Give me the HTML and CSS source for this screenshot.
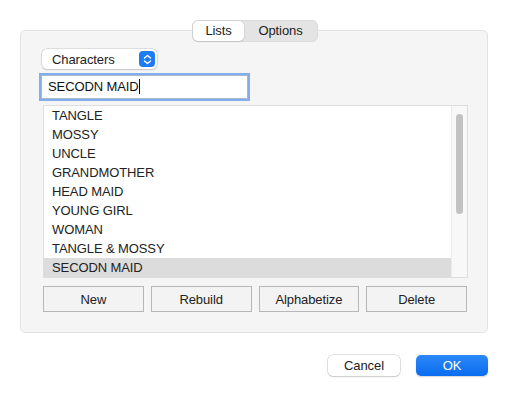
FILE: index.html
```html
<!doctype html>
<html lang="en">
  <head>
    <meta charset="UTF-8" />
    <title>Lists</title>
    <link rel="stylesheet" href="styles.css">
  </head>
  <body>
    <div class="dialog">
      <div class="tabs">
        <div class="tab tab-active">Lists</div>
        <div class="tab tab-options">Options</div>
      </div>

      <div class="group">
        <div class="popup">
          <span class="popup-label">Characters</span>
          <span class="popup-arrows">
            <svg width="9" height="11" viewBox="0 0 9 11">
              <path d="M1.5 4 L4.5 1.5 L7.5 4 M1.5 7 L4.5 9.5 L7.5 7" fill="none" stroke="#fff" stroke-width="1.4" stroke-linecap="round" stroke-linejoin="round" />
            </svg>
          </span>
        </div>

        <div class="field">SECODN MAID<span class="caret"></span></div>

        <div class="list">
          <ul class="rows">
            <li>TANGLE</li>
            <li>MOSSY</li>
            <li>UNCLE</li>
            <li>GRANDMOTHER</li>
            <li>HEAD MAID</li>
            <li>YOUNG GIRL</li>
            <li>WOMAN</li>
            <li>TANGLE &amp; MOSSY</li>
            <li class="selected">SECODN MAID</li>
          </ul>
          <div class="scrollbar">
            <div class="thumb"></div>
          </div>
        </div>

        <div class="actions">
          <button class="btn">New</button>
          <button class="btn">Rebuild</button>
          <button class="btn">Alphabetize</button>
          <button class="btn">Delete</button>
        </div>
      </div>

      <div class="footer">
        <button class="push">Cancel</button>
        <button class="push push-default">OK</button>
      </div>
    </div>
  </body>
</html>
```

FILE: styles.css
```css
* {
  margin: 0;
  padding: 0;
  box-sizing: border-box;
}

body {
  font-family: 'Liberation Sans', Arial, sans-serif;
  font-size: 13px;
  letter-spacing: -0.1px;
  color: #222;
  background: #fff;
  width: 509px;
  height: 395px;
  overflow: hidden;
}

.dialog {
  position: relative;
  padding: 30px 21px 0 20px;
}

/* segmented control sits over the group box edge */
.tabs {
  position: absolute;
  top: 20px;
  left: 192px;
  display: flex;
  height: 22px;
  background: #e4e4e4;
  border: 1px solid #dadada;
  border-radius: 6px;
}

.tab {
  line-height: 20px;
  text-align: center;
  color: #222;
}

.tab-active {
  width: 51px;
  background: #fff;
  border-radius: 5px;
  box-shadow: 0 0 0 0.5px #c8c8c8, 0 1px 1px rgba(0, 0, 0, 0.12);
}

.tab-options {
  width: 73px;
}

.group {
  height: 303px;
  background: #f5f5f5;
  border: 1px solid #e3e3e3;
  border-radius: 5px;
  padding: 18px 20px 0 21px;
}

.popup {
  display: flex;
  align-items: center;
  justify-content: space-between;
  width: 115px;
  height: 20px;
  padding: 0 2px 0 10px;
  background: #fff;
  border-radius: 5px;
  box-shadow: 0 0 0 0.5px #c6c6c6, 0 1px 1.5px rgba(0, 0, 0, 0.18);
}

.popup-arrows {
  display: flex;
  align-items: center;
  justify-content: center;
  width: 16px;
  height: 16px;
  background: #1f7bf3;
  border-radius: 4px;
}

.field {
  width: 207px;
  height: 24px;
  margin: 6px 0 0 -1px;
  padding: 0 6px;
  line-height: 21px;
  background: #fff;
  border: 1px solid #a9b8cc;
  box-shadow: 0 0 0 2px #82aeee;
  color: #111;
}

.caret {
  display: inline-block;
  width: 1px;
  height: 15px;
  background: #111;
  vertical-align: -3px;
}

.list {
  display: flex;
  height: 173px;
  margin-top: 6px;
  margin-left: 1px;
  width: 425px;
  background: #fff;
  border: 1px solid #dedede;
}

.rows {
  flex: 1;
  list-style: none;
}

.rows li {
  height: 19px;
  line-height: 19px;
  padding-left: 8px;
}

.rows li.selected {
  background: #dcdcdc;
}

.scrollbar {
  width: 16px;
  background: #f8f8f8;
  border-left: 1px solid #ececec;
  padding: 8px 3px 0 4px;
}

.thumb {
  width: 7px;
  height: 100px;
  background: #c2c2c2;
  border-radius: 4px;
}

.actions {
  display: flex;
  gap: 7px;
  margin-top: 8px;
  margin-left: 1px;
}

.btn {
  width: 101px;
  height: 26px;
  font: inherit;
  letter-spacing: inherit;
  color: #222;
  background: #f3f3f3;
  border: 1px solid #b7b7b7;
}

.footer {
  display: flex;
  justify-content: flex-end;
  gap: 16px;
  margin-top: 22px;
}

.push {
  width: 72px;
  height: 21px;
  font: inherit;
  letter-spacing: inherit;
  color: #222;
  background: #fff;
  border: none;
  border-radius: 5px;
  box-shadow: 0 0 0 0.5px #c6c6c6, 0 1px 1.5px rgba(0, 0, 0, 0.18);
}

.push-default {
  color: #fff;
  background: linear-gradient(#2c88f7, #0a6df0);
  box-shadow: 0 1px 1.5px rgba(0, 0, 0, 0.18);
}
```
